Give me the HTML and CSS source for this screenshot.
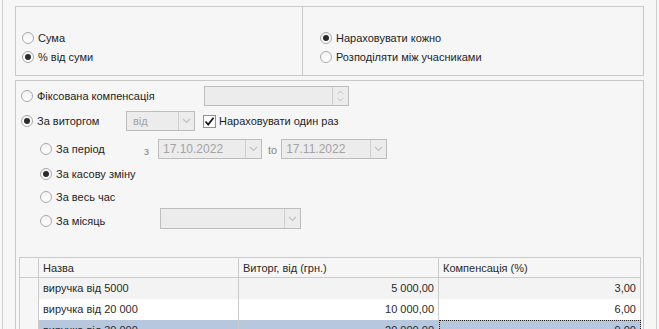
FILE: index.html
```html
<!DOCTYPE html>
<html lang="uk">
<head>
<meta charset="utf-8">
<title>Компенсація</title>
<link rel="stylesheet" href="styles.css">
</head>
<body>
<div class="frame">
  <div class="group top-group">
    <div class="half half-left">
      <div class="opt"><span class="radio"></span><span class="lbl">Сума</span></div>
      <div class="opt"><span class="radio on"></span><span class="lbl">% від суми</span></div>
    </div>
    <div class="half half-right">
      <div class="opt"><span class="radio on"></span><span class="lbl clip">Нараховувати кожного</span></div>
      <div class="opt"><span class="radio"></span><span class="lbl">Розподіляти між учасниками</span></div>
    </div>
  </div>

  <div class="group main-group">
    <div class="row r1">
      <div class="cell c-fixed"><span class="radio"></span><span class="lbl">Фіксована компенсація</span></div>
      <div class="field spin">
        <span class="value"></span>
        <span class="spin-btn">
          <svg width="9" height="16" viewBox="0 0 9 16"><path d="M1.5 6 L4.5 3 L7.5 6" fill="none" stroke="#c2c2c2" stroke-width="1"/><path d="M1.5 10 L4.5 13 L7.5 10" fill="none" stroke="#c2c2c2" stroke-width="1"/></svg>
        </span>
      </div>
    </div>

    <div class="row r2">
      <div class="cell c-revenue"><span class="radio on"></span><span class="lbl">За виторгом</span></div>
      <div class="field combo combo-from">
        <span class="value">від</span>
        <span class="drop"><svg width="9" height="6" viewBox="0 0 9 6"><path d="M1 1 L4.5 4.5 L8 1" fill="none" stroke="#c2c2c2" stroke-width="1.2"/></svg></span>
      </div>
      <div class="check-wrap">
        <span class="checkbox"><svg width="11" height="11" viewBox="0 0 11 11"><path d="M1.5 5.5 L4.2 8.5 L9.5 1.8" fill="none" stroke="#1a1a1a" stroke-width="1.8"/></svg></span>
        <span class="lbl">Нараховувати один раз</span>
      </div>
    </div>

    <div class="row r3 sub">
      <div class="cell c-sub"><span class="radio"></span><span class="lbl">За період</span></div>
      <span class="small-lbl from-lbl">з</span>
      <div class="field combo date-1">
        <span class="value">17.10.2022</span>
        <span class="drop"><svg width="9" height="6" viewBox="0 0 9 6"><path d="M1 1 L4.5 4.5 L8 1" fill="none" stroke="#c2c2c2" stroke-width="1.2"/></svg></span>
      </div>
      <span class="small-lbl to-lbl">to</span>
      <div class="field combo date-2">
        <span class="value">17.11.2022</span>
        <span class="drop"><svg width="9" height="6" viewBox="0 0 9 6"><path d="M1 1 L4.5 4.5 L8 1" fill="none" stroke="#c2c2c2" stroke-width="1.2"/></svg></span>
      </div>
    </div>

    <div class="row r4 sub">
      <div class="cell c-sub"><span class="radio on"></span><span class="lbl">За касову зміну</span></div>
    </div>

    <div class="row r5 sub">
      <div class="cell c-sub"><span class="radio"></span><span class="lbl">За весь час</span></div>
    </div>

    <div class="row r6 sub">
      <div class="cell c-month"><span class="radio"></span><span class="lbl">За місяць</span></div>
      <div class="field combo month">
        <span class="value"></span>
        <span class="drop"><svg width="9" height="6" viewBox="0 0 9 6"><path d="M1 1 L4.5 4.5 L8 1" fill="none" stroke="#c2c2c2" stroke-width="1.2"/></svg></span>
      </div>
    </div>

    <table class="grid">
      <colgroup>
        <col class="col-ind"><col class="col-name"><col class="col-rev"><col class="col-comp">
      </colgroup>
      <thead>
        <tr><th class="ind"></th><th>Назва</th><th>Виторг, від (грн.)</th><th>Компенсація (%)</th></tr>
      </thead>
      <tbody>
        <tr class="odd"><td class="ind"></td><td>виручка від 5000</td><td class="num">5 000,00</td><td class="num">3,00</td></tr>
        <tr class="even"><td class="ind"></td><td>виручка від 20 000</td><td class="num">10 000,00</td><td class="num">6,00</td></tr>
        <tr class="sel"><td class="ind"><span class="arrow"></span></td><td>виручка від 30 000</td><td class="num">20 000,00</td><td class="num focus">9,00</td></tr>
      </tbody>
    </table>
  </div>
</div>
</body>
</html>
```
FILE: styles.css
```css
* { box-sizing: border-box; }

html, body {
  margin: 0;
  padding: 0;
  background: #f6f6f6;
  overflow: hidden;
}

body {
  width: 659px;
  height: 329px;
  font-family: "Liberation Sans", Arial, sans-serif;
  font-size: 11px;
  color: #1e1e1e;
}

.frame {
  margin-left: 2px;
  width: 655px;
  height: 329px;
  border-left: 1px solid #cdcdcd;
  border-right: 1px solid #cdcdcd;
  padding: 6px 0 0 12px;
  overflow: hidden;
}

.group {
  width: 629px;
  border: 1px solid #c9c9c9;
}

/* top group */
.top-group {
  height: 70px;
  display: flex;
}

.half {
  display: flex;
  flex-direction: column;
  padding-top: 21px;
}

.half-left {
  width: 287px;
  padding-left: 6px;
  border-right: 1px solid #c9c9c9;
}

.half-right {
  flex: 1;
  padding-left: 17px;
}

.opt {
  height: 19px;
  display: flex;
  align-items: center;
  white-space: nowrap;
}

.lbl { white-space: nowrap; }

.clip {
  display: inline-block;
  width: 105px;
  overflow: hidden;
}

/* radio */
.radio {
  width: 12px;
  height: 12px;
  border-radius: 50%;
  border: 1px solid #a9a9a9;
  background: linear-gradient(#f2f2f2, #ffffff);
  margin-right: 4px;
  flex: none;
  display: flex;
  align-items: center;
  justify-content: center;
}

.radio.on::after {
  content: "";
  width: 6px;
  height: 6px;
  border-radius: 50%;
  background: #2b2b2b;
}

/* main group */
.main-group {
  margin-top: 4px;
  height: 260px;
  border-bottom: none;
}

.row {
  display: flex;
  align-items: center;
  height: 20px;
  padding-left: 5px;
}

.r1 { margin-top: 5px; }
.r2 { margin-top: 5px; }
.r3 { margin-top: 8px; }
.r4 { margin-top: 5px; }
.r5 { margin-top: 3px; }
.r6 { margin-top: 1px; height: 21px; }

.sub { padding-left: 24px; }

.cell {
  display: flex;
  align-items: center;
  height: 100%;
}

.c-fixed { width: 183px; }
.c-revenue { width: 105px; }
.c-sub { width: 104px; }
.c-month { width: 120px; }
.c-month .radio { margin-top: 5px; }
.c-month .lbl { margin-top: 5px; }

/* inputs */
.field {
  height: 20px;
  border: 1px solid #bdbdbd;
  background: #ececec;
  display: flex;
  align-items: center;
  color: #a3a3a3;
}

.field .value {
  flex: 1;
  padding-left: 4px;
  font-size: 12px;
  white-space: nowrap;
}

.spin { width: 145px; }

.spin-btn, .drop {
  width: 16px;
  height: 100%;
  border-left: 1px solid #cfcfcf;
  display: flex;
  align-items: center;
  justify-content: center;
  flex: none;
}

.combo-from { width: 69px; }
.combo-from .value { font-size: 11px; padding-left: 6px; }

.check-wrap {
  display: flex;
  align-items: center;
  margin-left: 8px;
}

.checkbox {
  width: 13px;
  height: 13px;
  border: 1px solid #8f8f8f;
  background: #fff;
  margin-right: 3px;
  display: flex;
  align-items: center;
  justify-content: center;
}

.small-lbl {
  color: #8a8a8a;
  font-size: 11px;
}

.from-lbl {
  width: 14px;
  padding-top: 4px;
}

.date-1 { width: 104px; }
.to-lbl { margin: 0 4px 0 6px; padding-top: 2px; }
.date-2 { width: 106px; }

.r6 .field { height: 21px; }
.month { width: 141px; }

/* grid */
.grid {
  margin-top: 28px;
  margin-left: 3px;
  border-collapse: collapse;
  table-layout: fixed;
  width: 621px;
  font-size: 11px;
  color: #2a2a2a;
}

.col-ind { width: 19px; }
.col-name { width: 200px; }
.col-rev { width: 200px; }
.col-comp { width: 202px; }

.grid th, .grid td {
  border-left: 1px solid #cbcbcb;
  border-right: 1px solid #cbcbcb;
  padding: 0 4px;
  white-space: nowrap;
  overflow: hidden;
  font-weight: normal;
  text-align: left;
}

.grid th {
  height: 20px;
  background: #f6f6f6;
  border-top: 1px solid #cbcbcb;
  border-bottom: 1px solid #cbcbcb;
}

.grid td { height: 21px; }

.grid .ind { background: #f6f6f6; padding: 0; }

.grid tr.odd td { background: #f3f3f3; }
.grid tr.even td { background: #ffffff; }
.grid tr.sel td { background: #b6c7de; }
.grid tr td.ind { background: #f6f6f6; }

.grid td.num { text-align: right; padding-right: 4px; }

.grid td.focus { outline: 1px dotted #222; outline-offset: -1px; }

.arrow {
  display: block;
  width: 0;
  height: 0;
  margin-left: 8px;
  margin-top: 4px;
  border-top: 3px solid transparent;
  border-bottom: 3px solid transparent;
  border-left: 4px solid #666;
}
```
